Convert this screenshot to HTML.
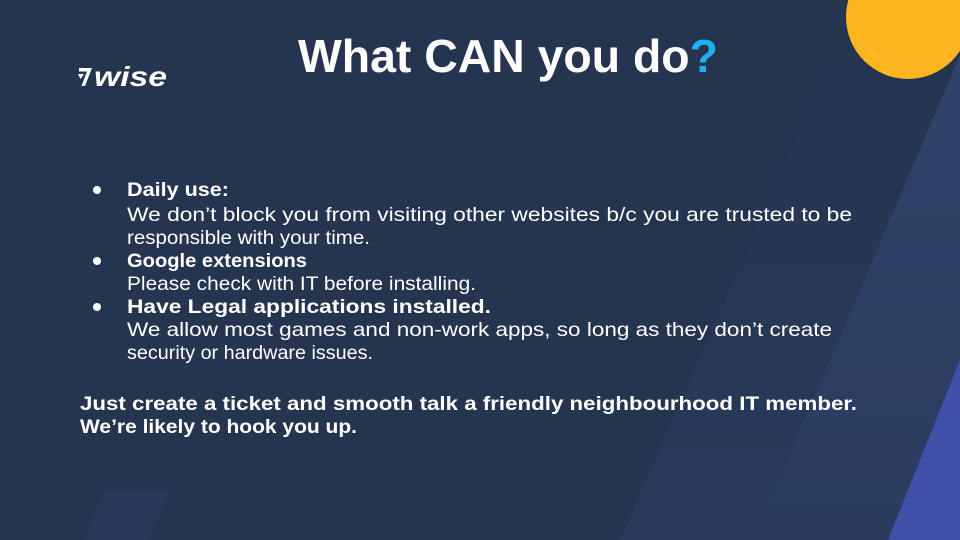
<!DOCTYPE html>
<html><head><meta charset="utf-8"><style>
html,body{margin:0;padding:0;width:960px;height:540px;overflow:hidden;background:#25344f}
svg{display:block}
</style></head><body>
<svg width="960" height="540" viewBox="0 0 960 540" xmlns="http://www.w3.org/2000/svg" font-family="Liberation Sans, sans-serif">
<defs><linearGradient id="g" x1="0" y1="0" x2="0" y2="1"><stop offset="0" stop-color="#2f4268"/><stop offset="1" stop-color="#2a3b5e"/></linearGradient>
<linearGradient id="f" x1="0" y1="0" x2="0" y2="1"><stop offset="0" stop-color="#25344f"/><stop offset="1" stop-color="#293a5b"/></linearGradient></defs>
<rect width="960" height="540" fill="#25344f"/>
<polygon points="830,60 960,60 960,540 620,540" fill="url(#f)"/>
<polygon points="962,50 960,540 754,540" fill="url(#g)"/>
<polygon points="960,360 960,540 888,540" fill="#3f51a8"/>
<polygon points="105,490 170,490 148,540 83,540" fill="#283858"/>
<circle cx="908" cy="17" r="62" fill="#fdb61f"/>
<g fill="#fff">
<path d="M79 68 L92 68 L85 86 L81.5 86 L87 71.5 L79 71.5 Z"/>
<path d="M78 74 L84 74 L80.5 79 Z"/>
</g>
<text x="94" y="86" font-size="28" font-weight="bold" font-style="italic" fill="#fff" textLength="73" lengthAdjust="spacingAndGlyphs">wise</text>
<text x="298" y="72" font-size="46" font-weight="bold" fill="#fff" textLength="420" lengthAdjust="spacingAndGlyphs">What CAN you do<tspan fill="#1eb0f0">?</tspan></text>
<g fill="#fff">
<circle cx="97" cy="190" r="4"/><circle cx="97" cy="261" r="4"/><circle cx="97" cy="307" r="4"/>
</g>
<g fill="#fff" font-size="19.5">
<text x="127" y="196" font-weight="bold" textLength="102" lengthAdjust="spacingAndGlyphs">Daily use:</text>
<text x="127" y="221" textLength="725" lengthAdjust="spacingAndGlyphs">We don’t block you from visiting other websites b/c you are trusted to be</text>
<text x="127" y="244" textLength="243" lengthAdjust="spacingAndGlyphs">responsible with your time.</text>
<text x="127" y="267" font-weight="bold" textLength="180" lengthAdjust="spacingAndGlyphs">Google extensions</text>
<text x="127" y="290" textLength="349" lengthAdjust="spacingAndGlyphs">Please check with IT before installing.</text>
<text x="127" y="313" font-weight="bold" textLength="364" lengthAdjust="spacingAndGlyphs">Have Legal applications installed.</text>
<text x="127" y="336" textLength="705" lengthAdjust="spacingAndGlyphs">We allow most games and non-work apps, so long as they don’t create</text>
<text x="127" y="359" textLength="246" lengthAdjust="spacingAndGlyphs">security or hardware issues.</text>
<text x="80" y="410" font-weight="bold" textLength="777" lengthAdjust="spacingAndGlyphs">Just create a ticket and smooth talk a friendly neighbourhood IT member.</text>
<text x="80" y="433" font-weight="bold" textLength="277" lengthAdjust="spacingAndGlyphs">We’re likely to hook you up.</text>
</g>
</svg>
</body></html>
